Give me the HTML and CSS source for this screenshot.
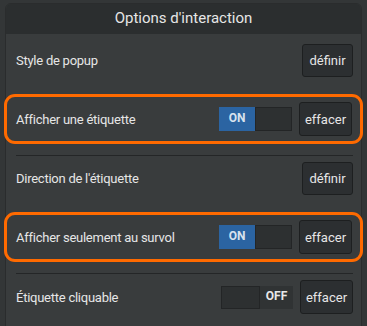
FILE: index.html
```html
<!DOCTYPE html>
<html>
<head>
    <title>Options d'interaction</title>
    <link rel="stylesheet" href="styles.css">
</head>
<body>

<div class="panel">
    <div class="panel-header">Options d'interaction</div>
    <div class="panel-body">
        <div class="row first">
            <span class="label">Style de popup</span>
            <button class="btn btn-define">définir</button>
        </div>
        <div class="row hl">
            <span class="label">Afficher une étiquette</span>
            <div class="toggle on"><span class="state">ON</span><span class="knob"></span></div>
            <button class="btn">effacer</button>
        </div>
        <div class="row">
            <span class="label">Direction de l'étiquette</span>
            <button class="btn btn-define">définir</button>
        </div>
        <div class="row hl">
            <span class="label">Afficher seulement au survol</span>
            <div class="toggle on"><span class="state">ON</span><span class="knob"></span></div>
            <button class="btn">effacer</button>
        </div>
        <div class="row">
            <span class="label">Étiquette cliquable</span>
            <div class="toggle off"><span class="knob"></span><span class="state">OFF</span></div>
            <button class="btn">effacer</button>
        </div>
    </div>
</div>

</body>
</html>
```

FILE: styles.css
```css
body {
    margin: 0;
    background-color: #333637;
    font-family: 'Roboto', sans-serif;
    color: #e6e6e6;
}
.panel {
    margin: 3px 0 0 5px;
    width: 357px;
    height: 330px;
    box-sizing: border-box;
    background-color: #393c3d;
    border: 1px solid #2a2c2d;
    border-radius: 6px 6px 0 0;
}
.panel-header {
    height: 30px;
    line-height: 29px;
    background-color: #2b2e2f;
    text-align: center;
    font-size: 15px;
    border-radius: 5px 5px 0 0;
}
.row {
    display: flex;
    align-items: center;
    margin: 0 8px 0 10px;
    padding: 6px 0;
    border-top: 1px solid #242627;
}
.row.first {
    border-top: none;
    padding-top: 10px;
}
.row.hl {
    margin: 11px -2px 11px -2px;
    padding: 5px 8px 5px 9px;
    border: 3px solid #ff6a00;
    border-radius: 11px;
}
.label {
    flex: 1;
    font-size: 13px;
    letter-spacing: -0.25px;
}
.btn {
    width: 53px;
    height: 34px;
    padding: 0;
    background-color: #2c2f31;
    border: 1px solid #1d1f20;
    border-radius: 3px;
    color: #e6e6e6;
    font-family: 'Roboto', sans-serif;
    font-size: 13px;
}
.btn-define {
    width: 51px;
    height: 33px;
}
.toggle {
    display: flex;
    width: 73px;
    height: 24px;
    margin-right: 7px;
    box-sizing: border-box;
    background-color: #303334;
    font-size: 12px;
    font-weight: bold;
}
.toggle .state {
    flex: 1;
    display: flex;
    align-items: center;
    justify-content: center;
    padding-bottom: 2px;
}
.toggle.on .state {
    background-color: #2b64a2;
    color: #d8e2ee;
}
.toggle .knob {
    width: 37px;
    box-sizing: border-box;
    background-color: #2d3031;
    border: 1px solid #232526;
}
.toggle.off {
    width: 72px;
    height: 23px;
}
.toggle.off .knob {
    width: 39px;
}
.toggle.off .state {
    color: #e8e8e8;
}
```
